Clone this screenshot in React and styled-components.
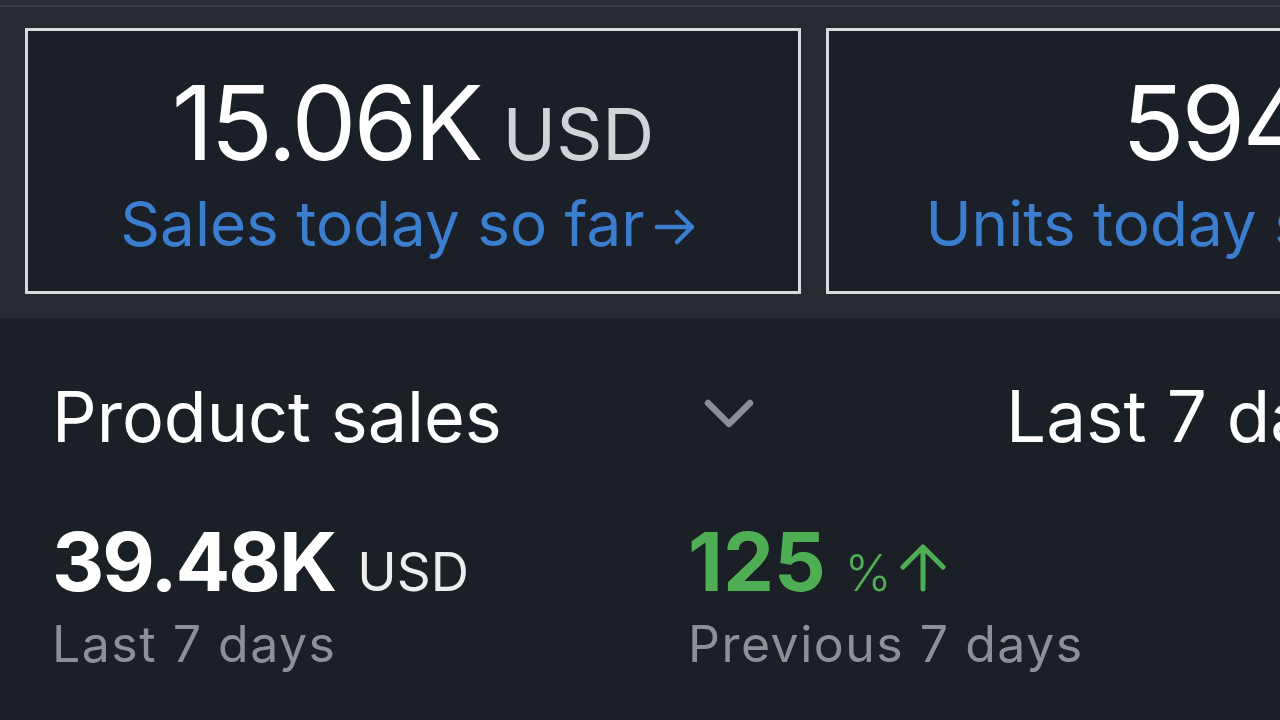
import React from "react";
import styled, { createGlobalStyle } from "styled-components";

const GlobalStyle = createGlobalStyle`
  html, body {
    margin: 0;
    padding: 0;
    background: #1b1f26;
    overflow: hidden;
  }
  body {
    font-family: "Inter", "Liberation Sans", sans-serif;
    -webkit-font-smoothing: antialiased;
  }
`;

const todayCards = [
  { value: "15.06K", unit: "USD", label: "Sales today so far" },
  { value: "594", unit: "", label: "Units today so far" },
];

const ArrowRight = () => (
  <svg width="42" height="38" viewBox="0 0 42 38" fill="none">
    <path
      d="M3 19H38M23 4L38 19L23 34"
      stroke="currentColor"
      strokeWidth="4.5"
      strokeLinecap="round"
      strokeLinejoin="round"
    />
  </svg>
);

const ArrowUp = () => (
  <svg width="52" height="48" viewBox="0 0 52 48" fill="none">
    <path
      d="M26 45V3M6 23L26 3L46 23"
      stroke="currentColor"
      strokeWidth="5"
      strokeLinecap="round"
      strokeLinejoin="round"
    />
  </svg>
);

const Chevron = () => (
  <svg width="52" height="32" viewBox="0 0 52 32" fill="none">
    <path
      d="M5 5L26 26L47 5"
      stroke="currentColor"
      strokeWidth="6.5"
      strokeLinecap="round"
      strokeLinejoin="round"
    />
  </svg>
);

const App = () => {
  return (
    <>
      <GlobalStyle />
      <Screen>
        <TopEdge />
        <TodayBand>
          {todayCards.map((card) => (
            <TodayCard key={card.label}>
              <ValueLine>
                <BigValue>{card.value}</BigValue>
                {card.unit && <BigUnit>{card.unit}</BigUnit>}
              </ValueLine>
              <CardLink>
                {card.label}
                <ArrowRight />
              </CardLink>
            </TodayCard>
          ))}
        </TodayBand>

        <SalesSection>
          <HeaderRow>
            <SectionTitle>Product sales</SectionTitle>
            <ChevronBox>
              <Chevron />
            </ChevronBox>
            <PeriodPicker>Last 7 days</PeriodPicker>
          </HeaderRow>

          <StatsRow>
            <Stat>
              <StatLine>
                <StatValue>39.48K</StatValue>
                <StatUnit>USD</StatUnit>
              </StatLine>
              <StatCaption>Last 7 days</StatCaption>
            </Stat>
            <Stat>
              <StatLine $green>
                <StatValue $wide>125</StatValue>
                <Percent>%</Percent>
                <UpMark>
                  <ArrowUp />
                </UpMark>
              </StatLine>
              <StatCaption>Previous 7 days</StatCaption>
            </Stat>
          </StatsRow>
        </SalesSection>
      </Screen>
    </>
  );
};

const Screen = styled.div`
  width: 1280px;
  height: 720px;
  overflow: hidden;
  display: flex;
  flex-direction: column;
  background: #1b1f26;
`;

const TopEdge = styled.div`
  height: 5px;
  background: #2a2d33;
  border-bottom: 2px solid #3a3d44;
`;

const TodayBand = styled.div`
  height: 311px;
  flex-shrink: 0;
  box-sizing: border-box;
  padding: 21px 0 0 25px;
  background: #262a31;
  display: flex;
  gap: 25px;
  overflow: hidden;
`;

const TodayCard = styled.div`
  flex: 0 0 776px;
  height: 266px;
  box-sizing: border-box;
  border: 3px solid #d9dadc;
  background: #1b1f27;
  display: flex;
  flex-direction: column;
  align-items: center;
  padding-top: 40px;
`;

const ValueLine = styled.div`
  display: flex;
  align-items: baseline;
  gap: 22px;
  line-height: 1;
`;

const BigValue = styled.span`
  font-size: 103px;
  font-weight: 400;
  color: #ffffff;
  letter-spacing: -3px;
`;

const BigUnit = styled.span`
  font-size: 72px;
  color: #d2d3d6;
`;

const CardLink = styled.div`
  margin-top: 19px;
  margin-right: 10px;
  display: flex;
  align-items: center;
  gap: 9px;
  font-size: 62px;
  line-height: 1;
  color: #3b7ed0;
  white-space: nowrap;

  svg {
    margin-top: 6px;
  }
`;

const SalesSection = styled.div`
  flex: 1;
  padding: 0 0 0 52px;
  display: flex;
  flex-direction: column;
`;

const HeaderRow = styled.div`
  display: flex;
  align-items: baseline;
  height: 71px;
  margin-top: 63px;
  white-space: nowrap;
`;

const SectionTitle = styled.div`
  width: 651px;
  flex-shrink: 0;
  font-size: 70px;
  line-height: 1;
  color: #ffffff;
`;

const ChevronBox = styled.div`
  width: 303px;
  flex-shrink: 0;
  align-self: flex-start;
  margin-top: 17px;
  color: #8b8e96;
  display: flex;
`;

const PeriodPicker = styled.div`
  font-size: 71px;
  line-height: 1;
  color: #ffffff;
`;

const StatsRow = styled.div`
  display: grid;
  grid-template-columns: 636px 1fr;
  margin-top: 70px;
`;

const Stat = styled.div`
  display: flex;
  flex-direction: column;
`;

const StatLine = styled.div`
  display: flex;
  align-items: baseline;
  gap: ${(p) => (p.$green ? "19px" : "22px")};
  line-height: 1;
  color: ${(p) => (p.$green ? "#4fae53" : "#ffffff")};
`;

const StatValue = styled.span`
  font-size: 81px;
  font-weight: 700;
  letter-spacing: ${(p) => (p.$wide ? "0px" : "-2px")};
`;

const StatUnit = styled.span`
  font-size: 53px;
  color: #eeeeef;
`;

const Percent = styled.span`
  font-size: 50px;
  font-weight: 300;
`;

const UpMark = styled.span`
  display: inline-flex;
  margin-left: -14px;
  align-self: flex-end;
  margin-bottom: 11px;
`;

const StatCaption = styled.div`
  margin-top: 16px;
  font-size: 50px;
  letter-spacing: 1.5px;
  line-height: 1;
  color: #8e9097;
  white-space: nowrap;
`;

export default App;
